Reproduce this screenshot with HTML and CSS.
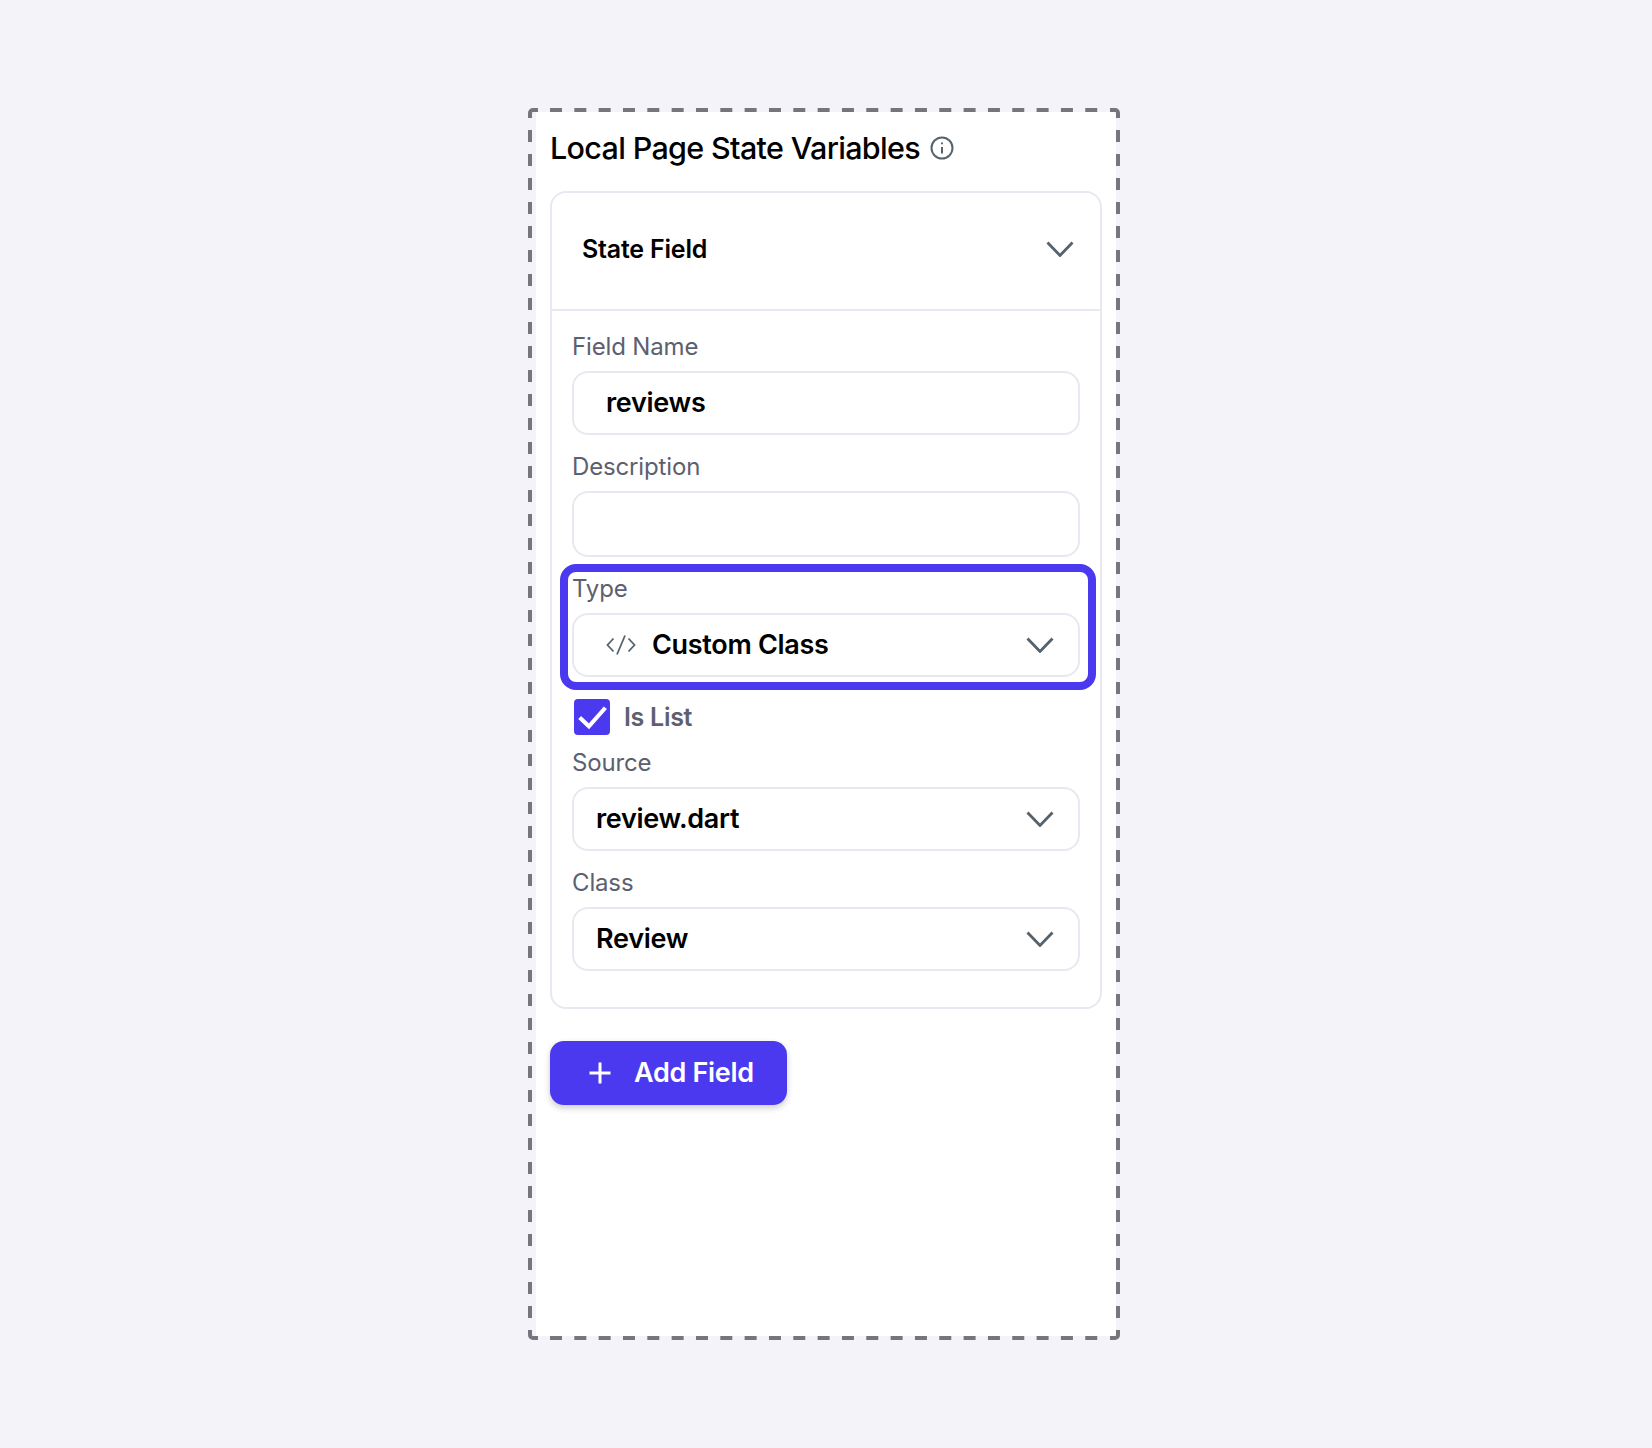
FILE: index.html
```html
<!DOCTYPE html>
<html lang="en">
<head>
  <meta charset="UTF-8" />
  <meta name="viewport" content="width=device-width, initial-scale=1.0" />
  <title>Local Page State Variables</title>
  <link rel="stylesheet" href="styles.css">
</head>
<body>
  <div class="frame">
    <svg class="frame-dashes" width="592" height="1232" aria-hidden="true">
      <path d="M2 10V5a3 3 0 0 1 3-3h5" />
      <path d="M582 2h5a3 3 0 0 1 3 3v5" />
      <path d="M2 1222v5a3 3 0 0 0 3 3h5" />
      <path d="M582 1230h5a3 3 0 0 0 3-3v-5" />
      <path class="dash-h" d="M22 2H570" />
      <path class="dash-h" d="M22 1230H570" />
      <path class="dash-v" d="M2 22V1210" />
      <path class="dash-v" d="M590 22V1210" />
    </svg>

    <div class="panel">
      <div class="panel-title">
        <h1>Local Page State Variables</h1>
        <svg class="info-icon" width="24" height="24" viewBox="0 0 24 24" aria-hidden="true">
          <circle cx="12" cy="12" r="10.5" />
          <path d="M12 11v6.5" />
          <path d="M12 6.6v1.6" />
        </svg>
      </div>

      <div class="card">
        <div class="card-header">
          <span>State Field</span>
          <svg class="chevron" width="28" height="16" viewBox="0 0 28 16" aria-hidden="true"><path d="M1.5 1.5 14 14.5 26.5 1.5" /></svg>
        </div>

        <div class="card-body">
          <div class="field">
            <label>Field Name</label>
            <div class="input input-indent"><span>reviews</span></div>
          </div>

          <div class="field">
            <label>Description</label>
            <div class="input input-tall"></div>
          </div>

          <!-- Type is the row called out in the picture -->
          <div class="field field-type">
            <div class="highlight"></div>
            <label>Type</label>
            <div class="input input-select input-code">
              <svg class="code-icon" width="30" height="24" viewBox="0 0 30 24" aria-hidden="true">
                <path d="M7.5 5.5 1.5 12l6 6.5" />
                <path d="M22.5 5.5 28.5 12l-6 6.5" />
                <path d="M19 2.5 11 21.5" />
              </svg>
              <span>Custom Class</span>
              <svg class="chevron" width="28" height="16" viewBox="0 0 28 16" aria-hidden="true"><path d="M1.5 1.5 14 14.5 26.5 1.5" /></svg>
            </div>
          </div>

          <div class="checkbox-row">
            <div class="checkbox">
              <svg width="36" height="36" viewBox="0 0 35 35" aria-hidden="true"><path d="M5.5 18 14.5 26.5 30.5 8.5" /></svg>
            </div>
            <span>Is List</span>
          </div>

          <div class="field field-source">
            <label>Source</label>
            <div class="input input-select">
              <span>review.dart</span>
              <svg class="chevron" width="28" height="16" viewBox="0 0 28 16" aria-hidden="true"><path d="M1.5 1.5 14 14.5 26.5 1.5" /></svg>
            </div>
          </div>

          <div class="field">
            <label>Class</label>
            <div class="input input-select">
              <span>Review</span>
              <svg class="chevron" width="28" height="16" viewBox="0 0 28 16" aria-hidden="true"><path d="M1.5 1.5 14 14.5 26.5 1.5" /></svg>
            </div>
          </div>
        </div>
      </div>

      <button class="add-button">
        <svg width="24" height="24" viewBox="0 0 24 24" aria-hidden="true"><path d="M12 1.5v21M1.5 12h21" /></svg>
        <span>Add Field</span>
      </button>
    </div>
  </div>
</body>
</html>
```

FILE: styles.css
```css
* {
  box-sizing: border-box;
}

body {
  margin: 0;
  height: 1448px;
  padding: 108px 0 0 528px;
  background-color: #f3f3f9;
  font-family: Inter, "Liberation Sans", sans-serif;
  color: #000;
}

.frame {
  position: relative;
  width: 592px;
  height: 1232px;
  padding: 4px 4px 4px 8px;
}

.frame-dashes {
  position: absolute;
  top: 0;
  left: 0;
}

.frame-dashes path {
  fill: none;
  stroke: #75757b;
  stroke-width: 4;
}

.frame-dashes .dash-h {
  stroke-dasharray: 12 12.33;
}

.frame-dashes .dash-v {
  stroke-dasharray: 12 12;
}

.panel {
  height: 100%;
  padding: 0 14px;
  background-color: #fff;
}

.panel-title {
  display: flex;
  align-items: center;
  gap: 10px;
  height: 79px;
  padding-bottom: 8px;
}

.panel-title h1 {
  margin: 0;
  font-size: 30.5px;
  font-weight: 500;
  letter-spacing: -0.67px;
}

.info-icon {
  fill: none;
  stroke: #57636c;
  stroke-width: 2;
}

.card {
  border: 2px solid #e8e8f1;
  border-radius: 16px;
  height: 818px;
}

.card-header {
  display: flex;
  align-items: center;
  justify-content: space-between;
  height: 118px;
  padding: 0 26px 4px 30px;
  border-bottom: 2px solid #e8e8f1;
  font-size: 25px;
  font-weight: 600;
  letter-spacing: -0.2px;
}

.chevron {
  fill: none;
  stroke: #57636c;
  stroke-width: 2.8;
  flex-shrink: 0;
}

.card-body {
  padding: 18px 20px 0;
}

.field {
  position: relative;
  margin-bottom: 14px;
}

.field label {
  display: block;
  height: 34px;
  margin-bottom: 8px;
  color: #5c6070;
  font-size: 24px;
  line-height: 35px;
  letter-spacing: -0.15px;
}

.input {
  display: flex;
  align-items: center;
  height: 64px;
  padding: 0 24px 0 22px;
  border: 2px solid #e8e8f1;
  border-radius: 16px;
  font-size: 27px;
  font-weight: 600;
  letter-spacing: -0.3px;
}

.input span {
  margin-bottom: 2px;
}

.input-indent {
  padding-left: 32px;
}

.input-tall {
  height: 66px;
}

.input-select {
  justify-content: space-between;
}

.input-code {
  padding-left: 32px;
}

.input-code span {
  flex: 1;
  margin-left: 16px;
}

.code-icon {
  fill: none;
  stroke: #57636c;
  stroke-width: 1.8;
  flex-shrink: 0;
}

.field-type {
  margin-bottom: 0;
}

.highlight {
  position: absolute;
  top: -7px;
  right: -16px;
  bottom: -13px;
  left: -12px;
  border: 8.5px solid #4b39ef;
  border-radius: 16px;
  pointer-events: none;
}

.checkbox-row {
  display: flex;
  align-items: center;
  gap: 14px;
  height: 35px;
  margin: 22px 0 11px 2px;
  color: #5c6070;
  font-size: 25px;
  font-weight: 600;
  letter-spacing: -0.3px;
}

.checkbox {
  width: 36px;
  height: 36px;
  border-radius: 4px;
  background-color: #4b39ef;
}

.checkbox svg {
  display: block;
  fill: none;
  stroke: #fff;
  stroke-width: 4;
}

.add-button {
  display: flex;
  align-items: center;
  gap: 22px;
  width: 237px;
  height: 64px;
  margin-top: 32px;
  padding: 0 0 0 38px;
  border: none;
  border-radius: 14px;
  background-color: #4b39ef;
  box-shadow: 0 3px 6px rgba(0, 0, 0, 0.2);
  color: #fff;
  font-family: inherit;
  font-size: 27px;
  font-weight: 600;
  letter-spacing: -0.3px;
}

.add-button span {
  margin-bottom: 2px;
}

.add-button svg {
  fill: none;
  stroke: #fff;
  stroke-width: 3;
}
```
